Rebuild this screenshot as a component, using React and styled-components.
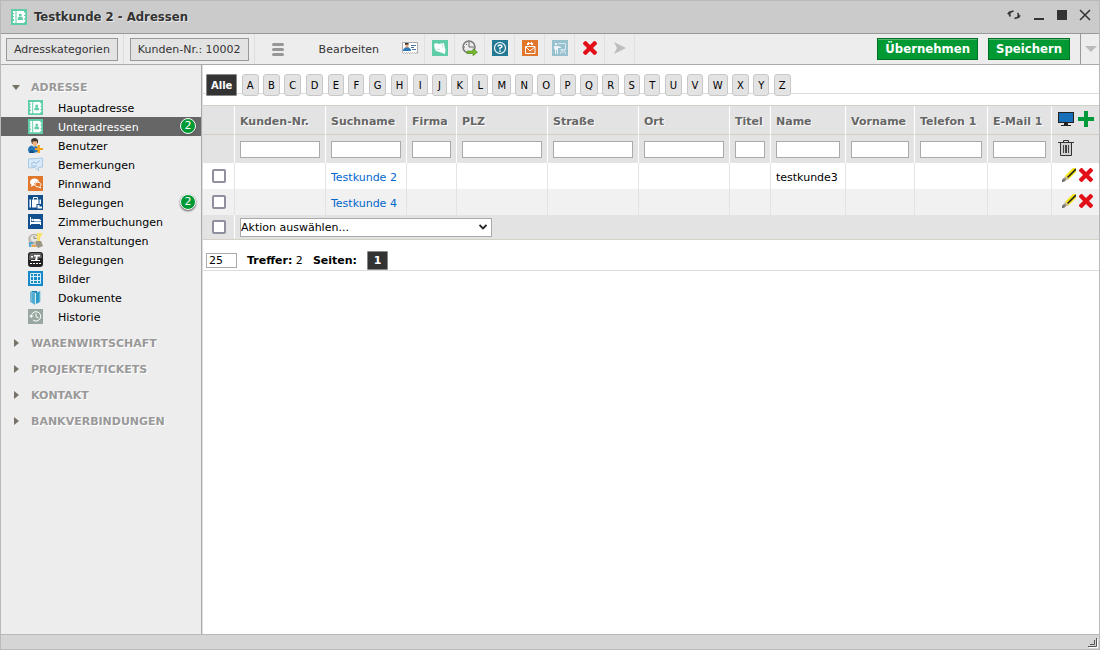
import React from 'react';
import styled, { createGlobalStyle } from 'styled-components';

const letters = 'ABCDEFGHIJKLMNOPQRSTUVWXYZ'.split('');

const columns = [
  { label: 'Kunden-Nr.', width: 91 },
  { label: 'Suchname', width: 81 },
  { label: 'Firma', width: 50 },
  { label: 'PLZ', width: 91 },
  { label: 'Straße', width: 91 },
  { label: 'Ort', width: 91 },
  { label: 'Titel', width: 41 },
  { label: 'Name', width: 75 },
  { label: 'Vorname', width: 69 },
  { label: 'Telefon 1', width: 73 },
  { label: 'E-Mail 1', width: 64 },
];

const rows = [
  { Suchname: 'Testkunde 2', Name: 'testkunde3' },
  { Suchname: 'Testkunde 4' },
];

const AddressIcon = ({ size = 15 }) => (
  <svg width={size} height={size} viewBox="0 0 16 16" aria-hidden="true">
    <path fill="#5fcda7" d="M0 0h16v16H0z" />
    <path fill="#fff" d="M2 2h2.500v2H2zM2 5h2.500v2H2zM2 8h2.500v2H2zM2 12h2.500v2H2zM3 2h1.500v12H3zM5.500 2H13v1.500h1.200V6H13v1h1.200v2.500H13v1h1.200V13H13v1H5.500z" />
    <path fill="#5fcda7" d="M8 5h2.600v2.600H8zM6.800 9l1-1h3l1 1v2h-5z" />
  </svg>
);

const UserIcon = () => (
  <svg width="15" height="15" viewBox="0 0 15 15" aria-hidden="true">
    <path fill="#3c3630" d="M3 2Q5-.8 8.500.4L10 2v3L8 6H4z" />
    <path fill="#efb27c" d="M4.500 3.500L9 3.200v3.300L7.500 8.500H6L4.500 6z" />
    <path fill="#2675b8" d="M0 12q0-4 4-4.500L6 9l2-1 2 1.500V14L5 15H1z" />
    <path fill="#174f84" d="M2 12l4 1v2H2z" />
    <path fill="#f5a31c" d="M9.500 7h2.400v3H15v2h-3.100v3H9.500v-3H7v-2h2.500z" />
  </svg>
);

const RemarkIcon = () => (
  <svg width="15" height="15" viewBox="0 0 15 15" aria-hidden="true">
    <path fill="#d8e9f7" stroke="#a9c9e5" d="M.5 2l14-1v9l-4 .5v3.500L7 10.500l-6.500.5z" />
    <path stroke="#9bbfdf" fill="none" d="M3 7l3-2 2 1.500L12 3.500M3 9h6" />
  </svg>
);

const PinIcon = () => (
  <svg width="15" height="15" viewBox="0 0 15 15" aria-hidden="true">
    <path fill="#e1762d" d="M0 0h15v15H0z" />
    <path fill="#fff" d="M6.500 2.500C4 2.500 2 4 2 6.200c0 1 .5 1.800 1.500 2.400L3 11l2.300-1.500c.5.1 1 .1 1.500 0L6 7.500 9 5.500l2 .5c-.3-2-2-3.500-4.500-3.500z" />
    <path fill="#e1762d" stroke="#fff" d="M9.800 6.300c2 0 3.200 1 3.200 2.300 0 .8-.4 1.300-1 1.700l.5 1.700-2-1.100c-2 .1-3.500-.8-3.500-2.200s1.300-2.400 2.800-2.400z" />
  </svg>
);

const LuggageIcon = () => (
  <svg width="15" height="15" viewBox="0 0 15 15" aria-hidden="true">
    <path fill="#114f8e" d="M0 0h15v15H0z" />
    <path fill="#fff" d="M1.500 4.500H3v8H1.500zM4 4.500h6.500v8H4zM11.500 4.500H13v5h-1.500z" />
    <path fill="none" stroke="#fff" d="M5.500 4.500v-2h4v2" />
    <path fill="#114f8e" d="M8.500 9H15v6H8.500z" />
    <path fill="#fff" d="M9.500 10h2v1.500H14v2H9.500z" />
  </svg>
);

const BedIcon = () => (
  <svg width="15" height="15" viewBox="0 0 15 15" aria-hidden="true">
    <path fill="#114f8e" d="M0 0h15v15H0z" />
    <path fill="#fff" d="M2 3h1v5h10v3h-1v-1H3v1H2zM6 5h5l2 1v1.500H6z" />
    <circle cx="4.600" cy="6" r="1.300" fill="#fff" />
  </svg>
);

const EventIcon = () => (
  <svg width="15" height="15" viewBox="0 0 15 15" aria-hidden="true">
    <path fill="#c9c3b7" d="M0 5q2-5 9-4v13H1z" />
    <circle cx="6" cy="5.500" r="4" fill="#e7e6e2" stroke="#b1aba0" />
    <path stroke="#8b857b" fill="none" d="M6 3v2.500h2.500" />
    <path fill="#f7e36c" d="M9 0h6l-3 5v4h2v1H9z" />
    <path fill="#9a9588" d="M8 8h5l2 5-5 2-2-3z" />
    <path fill="#54a9d9" d="M1 9h4v2H3v3H1z" />
    <path fill="#e7a94c" d="M4 12h4v2H4z" />
  </svg>
);

const PoolIcon = () => (
  <svg width="15" height="15" viewBox="0 0 15 15" aria-hidden="true">
    <rect width="15" height="15" rx="3" fill="#222" />
    <path fill="#666" d="M2.500 1h10L14 4v2L1 8V4z" />
    <path fill="#fff" d="M6 3h6v1.500H9.500V8H12v1H3V8h4l1-3.500H6zM2 11h2v1H2zM5 11h2v1H5zM8 11h2v1H8zM11 11h2v1h-2zM3 4h2v1.500H3z" />
  </svg>
);

const GridIcon = () => (
  <svg width="15" height="15" viewBox="0 0 15 15" aria-hidden="true">
    <path fill="#168ac9" d="M0 0h15v15H0z" />
    <path fill="none" stroke="#d8edf8" d="M2.500 2.500h10v10h-10zM5.500 2v11M9.500 2v11M2 5.500h11M2 9.500h11" />
  </svg>
);

const DocumentIcon = () => (
  <svg width="15" height="15" viewBox="0 0 15 15" aria-hidden="true">
    <path fill="#75b8d6" d="M2 2l2-1v12l-2-1z" />
    <path fill="#1682b3" d="M4 1h5v11H4z" />
    <path fill="#d9edf6" d="M4 2l4 1v11l-4-1z" />
    <path fill="#53add1" d="M4 2l3 1v12l-3-2z" />
    <path fill="#2a9bc9" d="M8 3l4-2v11l-4 2z" />
    <path fill="#8cc9e2" d="M11.500 1h1v11h-1z" />
  </svg>
);

const HistoryIcon = () => (
  <svg width="15" height="15" viewBox="0 0 15 15" aria-hidden="true">
    <path fill="#98a8a0" d="M0 0h15v15H0z" />
    <path fill="none" stroke="#fff" d="M3.300 7.500A4.700 4.700 0 1 1 5 11M8 4.500v3.300l2.500 1" />
    <path fill="#fff" d="M1 6.500h4.500L3.300 9z" />
  </svg>
);

const CardIcon = () => (
  <svg width="16" height="16" viewBox="0 0 16 16" aria-hidden="true">
    <path fill="#fff" stroke="#aaa" d="M.5 2.500h15v11l-1-1-1 1-1-1-1 1-1-1-1 1-1-1-1 1-1-1-1 1-1-1-1 1-1-1-1 1-1-1z" />
    <path fill="#3b3028" d="M3 3h3.500v2H3z" />
    <path fill="#e2a883" d="M3.500 4.500h3V8h-3z" />
    <path fill="#2b79b8" d="M1 9.500L3 7.500h4l2 2V11H1z" />
    <path stroke="#48709a" d="M9 5.500h5M9 7.500h3M10 9.500h4" />
  </svg>
);

const NoteIcon = () => (
  <svg width="16" height="16" viewBox="0 0 16 16" aria-hidden="true">
    <path fill="#5fcda7" d="M0 0h16v16H0z" />
    <path fill="#fff" d="M2 4l3-1 1 1 6-1 .5 3 1 4-.5 4-4-1.500L4 11 2.500 8z" />
    <path fill="none" stroke="#bfe9dc" d="M4 9l4 1M10 4l1 4" />
  </svg>
);

const ClockIcon = () => (
  <svg width="16" height="16" viewBox="0 0 16 16" aria-hidden="true">
    <circle cx="7" cy="7" r="6" fill="#ececec" stroke="#777" strokeWidth="1.500" />
    <path fill="none" stroke="#666" d="M7 2v5h5M2 7h1M7 11v1M4 4l1 1" />
    <path fill="#77b82a" stroke="#4c8718" strokeWidth=".6" d="M5 11h6V8.700l4.500 3.500-4.500 3.500v-2.200H5z" />
  </svg>
);

const HelpIcon = () => (
  <svg width="16" height="16" viewBox="0 0 16 16" aria-hidden="true">
    <path fill="#247a93" d="M0 0h16v16H0z" />
    <circle cx="8" cy="8" r="5.500" fill="none" stroke="#fff" strokeWidth="1.200" />
    <path fill="none" stroke="#fff" strokeWidth="1.500" d="M6 6.500q.2-1.500 2-1.500t2 1.500Q10 7.500 8 8v1.500" />
    <path fill="#fff" d="M7.200 10.500h1.500V12H7.200z" />
  </svg>
);

const MailIcon = () => (
  <svg width="16" height="16" viewBox="0 0 16 16" aria-hidden="true">
    <path fill="#e1762d" d="M0 0h16v16H0z" />
    <path fill="none" stroke="#fff" d="M3.500 6.500h9.500v7H3.500zM4 7l4 4 5-4" />
    <path fill="#fff" d="M6 2h1v1h2V2h1v1h1v2H9V4H7v1H5V3h1z" />
  </svg>
);

const MeetingIcon = () => (
  <svg width="16" height="16" viewBox="0 0 16 16" aria-hidden="true">
    <path fill="#98c1d0" d="M0 0h16v16H0z" />
    <path fill="#edf5f8" d="M3 3h2v2H3zM2 6h4l3 1v1H6v6H5v-4H4v4H3V9H2z" />
    <path fill="none" stroke="#d7e9ef" d="M6.500 4.500v-1h7v6h-5M9.500 10l-1 4M12.500 10l1 4M11 10v3" />
  </svg>
);

const DeleteIcon = () => (
  <svg width="14" height="14" viewBox="0 0 14 14" aria-hidden="true">
    <path fill="#e20f19" d="M2 0h1l4 4 4-4h1l2 2v1l-4 4 4 4v1l-2 2h-1l-4-4-4 4H2l-2-2v-1l4-4-4-4V2z" />
  </svg>
);

const SendIcon = () => (
  <svg width="12" height="12" viewBox="0 0 12 12" aria-hidden="true">
    <path fill="#bdbdbd" d="M0 0l12 6-12 6 3-6z" />
  </svg>
);

const MenuIcon = () => (
  <svg width="12" height="13" viewBox="0 0 12 13" aria-hidden="true">
    <path stroke="#969696" strokeWidth="3" strokeLinecap="round" d="M1.500 1.500h9M1.500 6.500h9M1.500 11.500h9" />
  </svg>
);

const MonitorIcon = () => (
  <svg width="16" height="16" viewBox="0 0 16 16" aria-hidden="true">
    <path fill="#222" d="M0 1h16v11H0zM6 12h4v2H6zM3 14h10v1H3z" />
    <path fill="#176fb8" d="M1 2h14v9H1z" />
  </svg>
);

const PlusIcon = () => (
  <svg width="16" height="16" viewBox="0 0 16 16" aria-hidden="true">
    <path fill="#009939" d="M6 0h4v6h6v4h-6v6H6v-6H0V6h6z" />
  </svg>
);

const TrashIcon = () => (
  <svg width="16" height="16" viewBox="0 0 16 16" aria-hidden="true">
    <path fill="#d0d0d0" stroke="#333" d="M2.500 3v12.500h11V3" />
    <path stroke="#333" fill="none" d="M0 2.500h16M5.500 2V.5h5V2" />
    <path stroke="#444" d="M5.500 5v8M7.500 5v8M8.500 5v8M10.500 5v8" />
  </svg>
);

const PencilIcon = () => (
  <svg width="14" height="14" viewBox="0 0 14 14" aria-hidden="true">
    <path fill="#f5e414" d="M11 0h3v4l-7 7-4-3z" />
    <path stroke="#222" strokeWidth="1.600" d="M5.500 9.500L14 1" />
    <path fill="#c8b88c" d="M3 8l4 3-3 1.500L2 10z" />
    <path fill="#777" d="M1 10.500l2-.5 1 2-2 2H0v-2z" />
  </svg>
);

const RefreshIcon = () => (
  <svg width="16" height="12" viewBox="0 0 16 12" aria-hidden="true">
    <path fill="none" stroke="#333" strokeWidth="1.600" d="M4.500 7.500Q2 4.500 4.500 3L7.500 2M11.500 4Q14 7 11.500 8.500L8.500 9.500" />
    <path fill="#333" d="M1 5l2.500-3L5 5.500zM11 6.500l1.500 3L15 6.500z" />
  </svg>
);

const MinimizeIcon = () => (
  <svg width="12" height="12" viewBox="0 0 12 12" aria-hidden="true">
    <path fill="#333" d="M1 9h10v2H1z" />
  </svg>
);

const MaximizeIcon = () => (
  <svg width="12" height="12" viewBox="0 0 12 12" aria-hidden="true">
    <path fill="#333" d="M1 1h10v10H1z" />
  </svg>
);

const CloseIcon = () => (
  <svg width="12" height="12" viewBox="0 0 12 12" aria-hidden="true">
    <path fill="none" stroke="#333" strokeWidth="1.500" d="M1 1l10 10M11 1L1 11" />
  </svg>
);

const ResizeIcon = () => (
  <svg width="10" height="10" viewBox="0 0 10 10" aria-hidden="true">
    <path fill="none" stroke="#fff" d="M9.500 1v8.500H1" />
    <path fill="none" stroke="#555" d="M8.500 0v8.500H0M6.500 2v4.500H2" />
  </svg>
);

const menuItems = [
  { label: 'Hauptadresse', icon: AddressIcon },
  { label: 'Unteradressen', icon: AddressIcon, count: 2, active: true },
  { label: 'Benutzer', icon: UserIcon },
  { label: 'Bemerkungen', icon: RemarkIcon },
  { label: 'Pinnwand', icon: PinIcon },
  { label: 'Belegungen', icon: LuggageIcon, count: 2 },
  { label: 'Zimmerbuchungen', icon: BedIcon },
  { label: 'Veranstaltungen', icon: EventIcon },
  { label: 'Belegungen', icon: PoolIcon },
  { label: 'Bilder', icon: GridIcon },
  { label: 'Dokumente', icon: DocumentIcon },
  { label: 'Historie', icon: HistoryIcon },
];

const sections = ['WARENWIRTSCHAFT', 'PROJEKTE/TICKETS', 'KONTAKT', 'BANKVERBINDUNGEN'];

const tools = [
  { label: 'Visitenkarte', icon: CardIcon },
  { label: 'Notiz', icon: NoteIcon },
  { label: 'Wiedervorlage', icon: ClockIcon },
  { label: 'Hilfe', icon: HelpIcon },
  { label: 'E-Mail', icon: MailIcon },
  { label: 'Termin', icon: MeetingIcon },
  { label: 'Entfernen', icon: DeleteIcon },
  { label: 'Senden', icon: SendIcon },
];

const App = () => {
  return (
    <>
      <GlobalStyle />
      <Window>
        <TitleBar>
          <AddressIcon size={16} />
          <Title>Testkunde 2 - Adressen</Title>
          <WindowControls>
            <IconButton aria-label="Aktualisieren"><RefreshIcon /></IconButton>
            <IconButton aria-label="Minimieren"><MinimizeIcon /></IconButton>
            <IconButton aria-label="Maximieren"><MaximizeIcon /></IconButton>
            <IconButton aria-label="Fenster schließen"><CloseIcon /></IconButton>
          </WindowControls>
        </TitleBar>
        <Toolbar>
          <ToolGroup>
            <GrayButton>Adresskategorien</GrayButton>
          </ToolGroup>
          <ToolGroup>
            <GrayButton>Kunden-Nr.: 10002</GrayButton>
          </ToolGroup>
          <MenuButton aria-label="Menü"><MenuIcon /></MenuButton>
          <EditButton>Bearbeiten</EditButton>
          {tools.map(({ label, icon: Icon }) => (
            <ToolButton key={label} aria-label={label}><Icon /></ToolButton>
          ))}
          <SaveGroup>
            <GreenButton>Übernehmen</GreenButton>
            <GreenButton>Speichern</GreenButton>
          </SaveGroup>
          <MoreButton aria-label="Mehr"><Arrow $down $large /></MoreButton>
        </Toolbar>
        <Body>
          <Sidebar>
            <SectionButton aria-expanded="true"><Arrow $down />ADRESSE</SectionButton>
            <MenuList>
              {menuItems.map(({ label, icon: Icon, count, active }, i) => (
                <li key={i}>
                  <MenuLink href="#" $active={active}>
                    <Icon />
                    <MenuLabel>{label}</MenuLabel>
                    {count && <Badge>{count}</Badge>}
                  </MenuLink>
                </li>
              ))}
            </MenuList>
            {sections.map((section) => (
              <SectionButton key={section} aria-expanded="false"><Arrow />{section}</SectionButton>
            ))}
          </Sidebar>
          <Content>
            <LetterBar>
              <Letters>
                <LetterButton $active>Alle</LetterButton>
                {letters.map((letter) => (
                  <LetterButton key={letter}>{letter}</LetterButton>
                ))}
              </Letters>
            </LetterBar>
            <Table>
              <colgroup>
                <Col $width={32} />
                {columns.map((col) => <Col key={col.label} $width={col.width} />)}
                <Col $width={47} />
              </colgroup>
              <thead>
                <HeadRow>
                  <HeadCell />
                  {columns.map((col) => <HeadCell key={col.label} scope="col">{col.label}</HeadCell>)}
                  <HeadCell>
                    <Actions>
                      <IconButton aria-label="Ansicht"><MonitorIcon /></IconButton>
                      <IconButton aria-label="Neu"><PlusIcon /></IconButton>
                    </Actions>
                  </HeadCell>
                </HeadRow>
                <FilterRow>
                  <FilterCell />
                  {columns.map((col) => (
                    <FilterCell key={col.label}>
                      <FilterInput type="text" aria-label={`${col.label} filtern`} />
                    </FilterCell>
                  ))}
                  <FilterCell>
                    <Actions>
                      <IconButton aria-label="Filter leeren"><TrashIcon /></IconButton>
                    </Actions>
                  </FilterCell>
                </FilterRow>
              </thead>
              <tbody>
                {rows.map((row) => (
                  <DataRow key={row.Suchname}>
                    <CheckCell><Checkbox type="checkbox" aria-label={row.Suchname} /></CheckCell>
                    {columns.map(({ label }) => (
                      <Cell key={label}>
                        {label === 'Suchname' ? <NameLink href="#">{row[label]}</NameLink> : row[label]}
                      </Cell>
                    ))}
                    <Cell>
                      <Actions $end>
                        <IconButton aria-label="Bearbeiten"><PencilIcon /></IconButton>
                        <IconButton aria-label="Löschen"><DeleteIcon /></IconButton>
                      </Actions>
                    </Cell>
                  </DataRow>
                ))}
              </tbody>
              <tfoot>
                <FootRow>
                  <CheckCell $foot><Checkbox type="checkbox" aria-label="Alle auswählen" /></CheckCell>
                  <FootCell colSpan={12}>
                    <SelectWrap>
                      <ActionSelect aria-label="Aktion">
                        <option>Aktion auswählen...</option>
                      </ActionSelect>
                      <svg width="8" height="6" viewBox="0 0 8 6" aria-hidden="true">
                        <path fill="none" stroke="#222" strokeWidth="1.800" d="M.5 1L4 4.500 7.500 1" />
                      </svg>
                    </SelectWrap>
                  </FootCell>
                </FootRow>
              </tfoot>
            </Table>
            <Pager>
              <CountInput type="text" defaultValue="25" aria-label="Treffer pro Seite" />
              <span><b>Treffer:</b> 2</span>
              <b>Seiten:</b>
              <PageButton>1</PageButton>
            </Pager>
          </Content>
        </Body>
        <StatusBar><ResizeIcon /></StatusBar>
      </Window>
    </>
  );
};

const GlobalStyle = createGlobalStyle`
  * {
    box-sizing: border-box;
  }

  body {
    margin: 0;
    font-family: Verdana, 'DejaVu Sans', sans-serif;
    font-size: 11px;
    color: #000;
    background: #fff;
  }

  button, input, select {
    font: inherit;
    color: inherit;
    margin: 0;
  }

  button {
    cursor: pointer;
  }

  svg {
    display: block;
    flex: none;
  }
`;

const Window = styled.div`
  display: flex;
  flex-direction: column;
  min-height: 100vh;
  border: 1px solid #b9b9b9;
`;

const TitleBar = styled.header`
  display: flex;
  align-items: center;
  gap: 7px;
  height: 33px;
  padding: 0 8px 0 10px;
  background: #cbcbcb;
  border-bottom: 1px solid #999;
`;

const Title = styled.h1`
  margin: 0;
  padding-bottom: 2px;
  font-family: Tahoma, 'DejaVu Sans Condensed', 'DejaVu Sans', sans-serif;
  font-size: 13px;
  font-weight: bold;
  color: #333;
  text-shadow: 1px 1px #e8e8e8;
`;

const WindowControls = styled.div`
  display: flex;
  align-items: center;
  gap: 11px;
  margin-left: auto;
  padding-bottom: 4px;
`;

const IconButton = styled.button`
  display: flex;
  padding: 0;
  border: 0;
  background: none;
`;

const Toolbar = styled.div`
  display: flex;
  align-items: stretch;
  height: 31px;
  color: #333;
  background: #ededed;
  border-bottom: 1px solid #aaa;
`;

const ToolGroup = styled.div`
  display: flex;
  align-items: center;
  padding: 0 5px;
  border-right: 1px solid #ddd;

  & + & {
    padding-left: 6px;
  }
`;

const GrayButton = styled.button`
  height: 23px;
  padding: 0 7px;
  background: #e3e3e3;
  border: 1px solid #999;
  white-space: nowrap;
`;

const MenuButton = styled(IconButton)`
  align-items: center;
  padding: 0 17px;
`;

const EditButton = styled(IconButton)`
  align-items: center;
  padding: 0 16px 0 18px;
`;

const ToolButton = styled(IconButton)`
  align-items: center;
  justify-content: center;
  width: 30px;
  padding-bottom: 2px;
  border-right: 1px solid #e0e0e0;
`;

const SaveGroup = styled.div`
  display: flex;
  align-items: center;
  gap: 10px;
  margin-left: auto;
  padding-right: 10px;
`;

const GreenButton = styled.button`
  height: 22px;
  padding: 0 7px;
  font-family: Tahoma, 'DejaVu Sans Condensed', 'DejaVu Sans', sans-serif;
  font-size: 13px;
  font-weight: bold;
  line-height: 16px;
  color: #fff;
  background: #009933;
  border: 1px solid #007022;
  box-shadow: inset 0 1px #55bb77;
`;

const MoreButton = styled(IconButton)`
  align-items: center;
  justify-content: flex-end;
  width: 19px;
  padding-right: 2px;
  border-left: 1px solid #999;
`;

const Arrow = styled.i`
  width: 0;
  height: 0;
  border: 4px solid transparent;
  ${({ $down }) => ($down
    ? 'border-top: 5px solid #777168; border-bottom: 0;'
    : 'border-left: 5px solid #777168; border-right: 0; margin: 0 1px 0 2px;')}
  ${({ $large }) => $large && 'border-width: 6px 6px 0; border-top-color: #bbb;'}
`;

const Body = styled.div`
  display: flex;
  flex: 1;
`;

const Sidebar = styled.nav`
  display: flex;
  flex-direction: column;
  flex: none;
  gap: 4px;
  width: 201px;
  padding-top: 11px;
  background: #ededed;
  border-right: 1px solid #aaa;
`;

const SectionButton = styled.button`
  display: flex;
  align-items: center;
  gap: 11px;
  height: 22px;
  padding: 0 0 0 11px;
  font-weight: bold;
  color: #999;
  text-shadow: 1px 1px #fff;
  background: none;
  border: 0;
`;

const MenuList = styled.ul`
  margin: -4px 0 0;
  padding: 0 0 2px;
  list-style: none;
`;

const MenuLink = styled.a`
  display: flex;
  align-items: center;
  gap: 15px;
  height: 19px;
  padding: 0 5px 0 27px;
  color: ${({ $active }) => ($active ? '#fff' : '#000')};
  background: ${({ $active }) => ($active ? '#666' : 'none')};
  text-decoration: none;
`;

const MenuLabel = styled.span`
  padding-top: 2px;
`;

const Badge = styled.span`
  width: 16px;
  height: 16px;
  margin: -2px 0 0 auto;
  border: 1px solid #fff;
  border-radius: 50%;
  line-height: 14px;
  text-align: center;
  color: #fff;
  background: #009933;
  box-shadow: 0 1px 2px #555;
`;

const Content = styled.main`
  flex: 1;
  min-width: 0;
  border-left: 1px solid #ddd;
`;

const LetterBar = styled.nav`
  height: 29px;
  margin-bottom: 11px;
  padding: 9px 0 0 3px;
  border-bottom: 1px solid #ddd;
`;

const Letters = styled.div`
  display: flex;
  justify-content: space-between;
  gap: 4px;
  max-width: 585px;
`;

const LetterButton = styled.button`
  flex: none;
  height: 22px;
  min-width: 15px;
  padding: 0 4px;
  font-size: 10px;
  font-weight: ${({ $active }) => ($active ? 'bold' : 'normal')};
  color: ${({ $active }) => ($active ? '#fff' : '#000')};
  background: ${({ $active }) => ($active ? '#333' : '#e3e3e3')};
  border: 1px solid ${({ $active }) => ($active ? '#888' : '#c8c8c8')};
  border-radius: ${({ $active }) => ($active ? '1px' : '3px')};
`;

const Table = styled.table`
  width: 100%;
  table-layout: fixed;
  border-collapse: separate;
  border-spacing: 0;
  border-top: 1px solid #d0d0c8;
  border-bottom: 1px solid #d5d0c8;
`;

const Col = styled.col`
  width: ${({ $width }) => $width}px;
`;

const HeadRow = styled.tr`
  height: 29px;
`;

const HeadCell = styled.th`
  padding: 2px 0 0 5px;
  text-align: left;
  white-space: nowrap;
  color: #666;
  text-shadow: 1px 1px #fff;
  background: #e3e3e3;
  border-right: 1px solid #fff;
  border-bottom: 1px solid #d3cdc3;

  &:last-child {
    padding: 0 0 2px 6px;
    border-right: 0;
  }
`;

const FilterRow = styled.tr`
  height: 28px;
`;

const FilterCell = styled.td`
  padding: 0 5px;
  background: #e3e3e3;
  border-right: 1px solid #fff;

  &:last-child {
    padding: 0 0 2px 6px;
    border-right: 0;
  }
`;

const FilterInput = styled.input`
  display: block;
  width: 100%;
  height: 17px;
  padding: 0 2px;
  background: #fff;
  border: 1px solid #aaa;
`;

const DataRow = styled.tr`
  height: 26px;

  &:nth-child(even) {
    background: #f1f1f1;
  }
`;

const Cell = styled.td`
  padding: 2px 5px 0;
  white-space: nowrap;
  border-right: 1px solid #e3e3e3;

  &:last-child {
    padding: 0 6px 2px 0;
    border-right: 0;
  }
`;

const CheckCell = styled.td`
  padding: 0 9px;
  border-right: 1px solid ${({ $foot }) => ($foot ? '#fff' : '#e3e3e3')};
`;

const Checkbox = styled.input`
  display: block;
  appearance: none;
  width: 14px;
  height: 14px;
  background: #fff;
  border: 2px solid #8f8f9d;
  border-radius: 2px;
`;

const NameLink = styled.a`
  color: #0066cc;
  text-decoration: none;
`;

const Actions = styled.div`
  display: flex;
  align-items: center;
  gap: ${({ $end }) => ($end ? 3 : 4)}px;
  justify-content: ${({ $end }) => ($end ? 'flex-end' : 'flex-start')};
`;

const FootRow = styled.tr`
  height: 24px;
  background: #e3e3e3;
`;

const FootCell = styled.td`
  padding: 0 5px;
`;

const SelectWrap = styled.div`
  display: grid;
  width: 252px;
  align-items: center;

  > * {
    grid-area: 1 / 1;
  }

  svg {
    justify-self: end;
    margin-right: 5px;
    pointer-events: none;
  }
`;

const ActionSelect = styled.select`
  appearance: none;
  width: 100%;
  height: 19px;
  padding: 0;
  background: #fff;
  border: 1px solid #aaa;
  border-radius: 0;
`;

const Pager = styled.div`
  display: flex;
  align-items: center;
  gap: 10px;
  height: 31px;
  padding: 11px 0 0 3px;
  border-bottom: 1px solid #ddd;
`;

const CountInput = styled.input`
  width: 31px;
  height: 15px;
  padding: 0 2px;
  border: 1px solid #aaa;
`;

const PageButton = styled.button`
  width: 21px;
  height: 19px;
  padding: 0;
  font-weight: bold;
  color: #fff;
  background: #333;
  border: 1px solid #888;
  border-radius: 1px;
`;

const StatusBar = styled.footer`
  display: flex;
  align-items: flex-end;
  justify-content: flex-end;
  height: 15px;
  padding: 0 1px 1px 0;
  background: #d5d5d5;
  border-top: 1px solid #b9b9b9;
`;

export default App;
